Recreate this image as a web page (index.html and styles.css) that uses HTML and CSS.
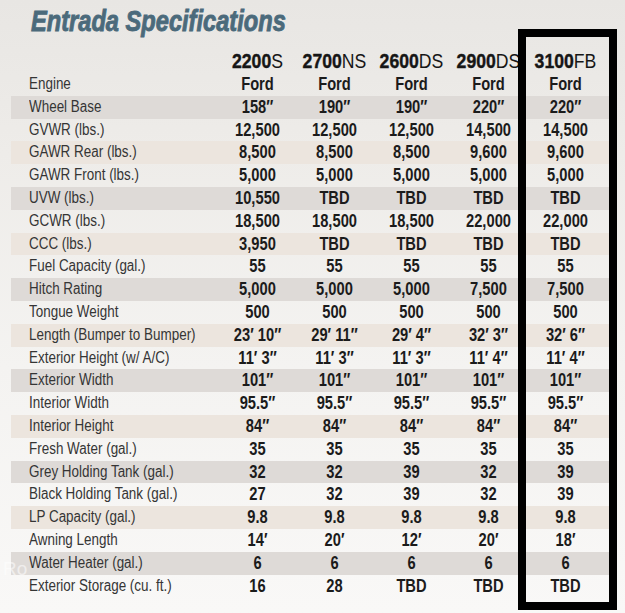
FILE: index.html
```html
<!DOCTYPE html>
<html lang="en">
<head>
<meta charset="utf-8">
<title>Entrada Specifications</title>
<link rel="stylesheet" href="styles.css">
</head>
<body>
<div class="page">
  <h1 class="title">Entrada Specifications</h1>
  <div class="table">
    <div class="row head"><span class="label"></span><span><b>2200</b>S</span><span><b>2700</b>NS</span><span><b>2600</b>DS</span><span><b>2900</b>DS</span><span><b>3100</b>FB</span></div>
    <div class="row"><span class="label">Engine</span><span>Ford</span><span>Ford</span><span>Ford</span><span>Ford</span><span>Ford</span></div>
    <div class="row gray"><span class="label">Wheel Base</span><span>158″</span><span>190″</span><span>190″</span><span>220″</span><span>220″</span></div>
    <div class="row"><span class="label">GVWR (lbs.)</span><span>12,500</span><span>12,500</span><span>12,500</span><span>14,500</span><span>14,500</span></div>
    <div class="row tan"><span class="label">GAWR Rear (lbs.)</span><span>8,500</span><span>8,500</span><span>8,500</span><span>9,600</span><span>9,600</span></div>
    <div class="row"><span class="label">GAWR Front (lbs.)</span><span>5,000</span><span>5,000</span><span>5,000</span><span>5,000</span><span>5,000</span></div>
    <div class="row gray"><span class="label">UVW (lbs.)</span><span>10,550</span><span>TBD</span><span>TBD</span><span>TBD</span><span>TBD</span></div>
    <div class="row"><span class="label">GCWR (lbs.)</span><span>18,500</span><span>18,500</span><span>18,500</span><span>22,000</span><span>22,000</span></div>
    <div class="row tan"><span class="label">CCC (lbs.)</span><span>3,950</span><span>TBD</span><span>TBD</span><span>TBD</span><span>TBD</span></div>
    <div class="row"><span class="label">Fuel Capacity (gal.)</span><span>55</span><span>55</span><span>55</span><span>55</span><span>55</span></div>
    <div class="row gray"><span class="label">Hitch Rating</span><span>5,000</span><span>5,000</span><span>5,000</span><span>7,500</span><span>7,500</span></div>
    <div class="row"><span class="label">Tongue Weight</span><span>500</span><span>500</span><span>500</span><span>500</span><span>500</span></div>
    <div class="row tan"><span class="label">Length (Bumper to Bumper)</span><span>23′ 10″</span><span>29′ 11″</span><span>29′ 4″</span><span>32′ 3″</span><span>32′ 6″</span></div>
    <div class="row"><span class="label">Exterior Height (w/ A/C)</span><span>11′ 3″</span><span>11′ 3″</span><span>11′ 3″</span><span>11′ 4″</span><span>11′ 4″</span></div>
    <div class="row gray"><span class="label">Exterior Width</span><span>101″</span><span>101″</span><span>101″</span><span>101″</span><span>101″</span></div>
    <div class="row"><span class="label">Interior Width</span><span>95.5″</span><span>95.5″</span><span>95.5″</span><span>95.5″</span><span>95.5″</span></div>
    <div class="row tan"><span class="label">Interior Height</span><span>84″</span><span>84″</span><span>84″</span><span>84″</span><span>84″</span></div>
    <div class="row"><span class="label">Fresh Water (gal.)</span><span>35</span><span>35</span><span>35</span><span>35</span><span>35</span></div>
    <div class="row gray"><span class="label">Grey Holding Tank (gal.)</span><span>32</span><span>32</span><span>39</span><span>32</span><span>39</span></div>
    <div class="row"><span class="label">Black Holding Tank (gal.)</span><span>27</span><span>32</span><span>39</span><span>32</span><span>39</span></div>
    <div class="row tan"><span class="label">LP Capacity (gal.)</span><span>9.8</span><span>9.8</span><span>9.8</span><span>9.8</span><span>9.8</span></div>
    <div class="row"><span class="label">Awning Length</span><span>14′</span><span>20′</span><span>12′</span><span>20′</span><span>18′</span></div>
    <div class="row gray"><span class="label">Water Heater (gal.)</span><span>6</span><span>6</span><span>6</span><span>6</span><span>6</span></div>
    <div class="row"><span class="label">Exterior Storage (cu. ft.)</span><span>16</span><span>28</span><span>TBD</span><span>TBD</span><span>TBD</span></div>
  </div>
  <div class="highlight"></div>
  <div class="watermark">Ro</div>
</div>
</body>
</html>
```
FILE: styles.css
```css
html, body {
  margin: 0;
  padding: 0;
}
body {
  background: #f3f2ef;
}
.page {
  position: relative;
  width: 625px;
  height: 613px;
  overflow: hidden;
  background: linear-gradient(180deg, #e8e6e3 0%, #eeece9 25%, #f4f3f1 60%, #f9f8f7 100%);
  font-family: "Liberation Sans", Arial, sans-serif;
}
.title {
  margin: 0 0 0 31px;
  padding-top: 4px;
  width: max-content;
  height: 34px;
  line-height: 34px;
  font-size: 29px;
  font-weight: 700;
  font-style: italic;
  color: #4b6a7b;
  -webkit-text-stroke: 0.9px #4b6a7b;
  transform: scaleX(0.815);
  transform-origin: 0 50%;
}
.table {
  margin: 10px 0 0 11px;
  width: 604px;
}
.row {
  display: grid;
  grid-template-columns: 190px repeat(5, 77px);
  padding-left: 18px;
  height: 22.8px;
  line-height: 22.8px;
  font-size: 17.5px;
  font-weight: 700;
  color: #1b1b1b;
  white-space: nowrap;
}
.row > span {
  text-align: center;
  transform: scaleX(0.84);
  transform-origin: 50% 50%;
}
.row > .label {
  text-align: left;
  font-size: 16px;
  font-weight: 400;
  color: #353535;
  transform-origin: 0 50%;
}
.row.gray {
  background: #dedad7;
}
.row.tan {
  background: #ece5de;
}
.row.head {
  height: 25px;
  line-height: 25px;
  font-size: 21px;
  font-weight: 400;
  color: #161616;
}
.row.head b {
  font-weight: 700;
  -webkit-text-stroke: 0.4px #161616;
}
.highlight {
  position: absolute;
  left: 518px;
  top: 29px;
  width: 99px;
  height: 581px;
  box-sizing: border-box;
  border: 8px solid #000;
}
.watermark {
  position: absolute;
  left: 3px;
  top: 558px;
  font-size: 19px;
  color: rgba(255, 255, 255, 0.55);
}
```
